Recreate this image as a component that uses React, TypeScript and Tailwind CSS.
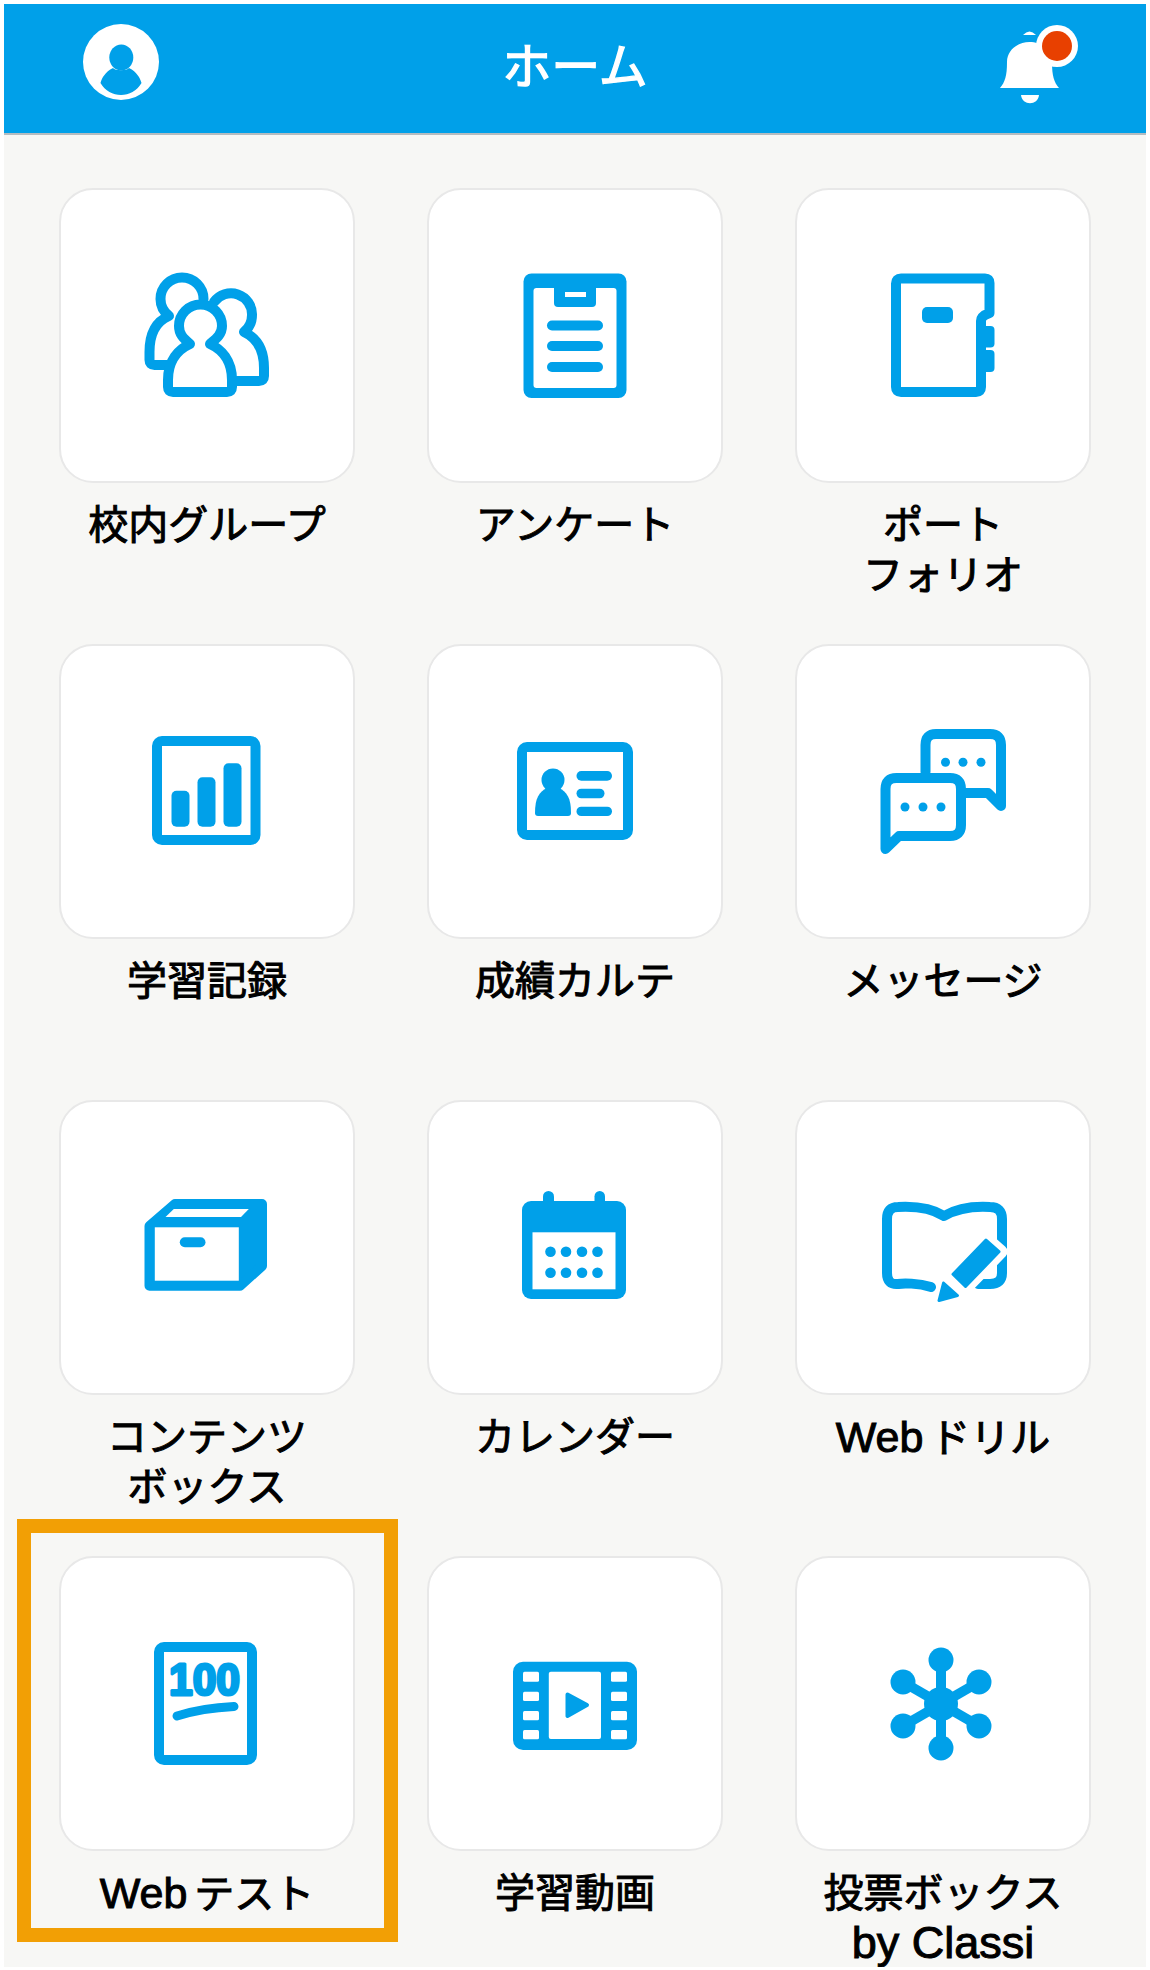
import React from 'react';

const BLUE = '#00a0e9';

const Svg: React.FC<{ children: React.ReactNode }> = ({ children }) => (
  <svg viewBox="0 0 130 130" className="w-[130px] h-[130px]" fill={BLUE}>
    {children}
  </svg>
);

const line = { fill: 'none', stroke: BLUE, strokeWidth: 10, strokeLinejoin: 'round', strokeLinecap: 'round' } as const;

const GroupIcon = () => (
  <Svg>
    <path {...line} d="M61.5 29A21.500 21.500 0 0 0 18.500 29C18.500 36 22 42 27 46C15 51 7.500 62 7.500 82V90Q7.500 95 12.500 95H30" />
    <path {...line} d="M72 32A21 21 0 0 1 110 45C110 52 107 58 102 62C113 67 122 78 122 98V106Q122 111 117 111H95" />
    <path
      {...line}
      fill="#fff"
      d="M48 74C37 79 26 90 26 110V117Q26 122 31 122H85Q90 122 90 117V110C90 90 79 79 68 74C75 68 80 64 80 56A21 21 0 0 0 37 56C37 64 41 68 48 74Z"
    />
  </Svg>
);

const ClipboardIcon = () => (
  <Svg>
    <rect x="13.5" y="3.5" width="103" height="124.5" rx="8" />
    <rect x="23.5" y="18" width="83" height="100" rx="3" fill="#fff" />
    <rect x="44" y="14" width="42" height="23" rx="4" />
    <rect x="55" y="22" width="21" height="5" fill="#fff" />
    <rect x="37" y="50.5" width="56" height="10" rx="5" />
    <rect x="37" y="71" width="56" height="10" rx="5" />
    <rect x="37" y="92" width="56" height="10" rx="5" />
  </Svg>
);

const NotebookIcon = () => (
  <Svg>
    <path {...line} d="M103 51Q103 46 111.5 43V13Q111.5 8.5 107 8.5H23Q18 8.5 18 13.5V117Q18 122 23 122H98Q103 122 103 117Z" />
    <rect x="44" y="37" width="31" height="16" rx="5" />
    <rect x="103" y="56" width="13.5" height="21.5" rx="4" />
    <rect x="103" y="80" width="13.5" height="22" rx="4" />
  </Svg>
);

const BarsIcon = () => (
  <Svg>
    <rect {...line} x="15" y="15" width="98.5" height="99" rx="5" />
    <rect x="29.5" y="64.7" width="18" height="36" rx="5" />
    <rect x="55.5" y="51.3" width="18" height="49.4" rx="5" />
    <rect x="81.5" y="37.3" width="18" height="63.4" rx="5" />
  </Svg>
);

const IdCardIcon = () => (
  <Svg>
    <rect {...line} x="12" y="21" width="106" height="88" rx="5" />
    <circle cx="43" cy="54" r="11.5" />
    <path d="M37 62C29 66 25 72 25 87Q25 90 28 90H58Q61 90 61 87C61 72 57 66 49 62Z" />
    <rect x="66.5" y="45" width="35.5" height="9.7" rx="4.8" />
    <rect x="66.5" y="62.7" width="28" height="9.6" rx="4.8" />
    <rect x="66.5" y="80.7" width="35.5" height="9.4" rx="4.7" />
  </Svg>
);

const ChatIcon = () => (
  <Svg>
    <path {...line} d="M47.5 46V19Q47.5 8 58 8H112Q123 8 123 19V80L110 67H86" />
    <circle cx="67.5" cy="36.3" r="4.5" />
    <circle cx="85" cy="36.3" r="4.5" />
    <circle cx="103" cy="36.3" r="4.5" />
    <path {...line} d="M7.5 123V63Q7.5 52 18.5 52H72Q83 52 83 63V99Q83 110 72 110H21Z" />
    <circle cx="27" cy="81" r="4.5" />
    <circle cx="45" cy="81" r="4.5" />
    <circle cx="63" cy="81" r="4.5" />
  </Svg>
);

const BoxIcon = () => (
  <Svg>
    <path stroke={BLUE} strokeWidth="10" strokeLinejoin="round" d="M33 22H120V84L98 103.700H7.500V44Z" />
    <rect x="12.800" y="45.300" width="84" height="53.400" fill="#fff" />
    <path fill="#fff" d="M31.800 27H106.800L99 35H23.500Z" />
    <rect x="37.800" y="55.300" width="25.700" height="10" rx="5" />
  </Svg>
);

const CalendarIcon = () => (
  <Svg>
    <rect x="12" y="19" width="104" height="98" rx="9" />
    <rect x="33" y="9" width="11" height="22" rx="5.500" />
    <rect x="84.500" y="9" width="10.500" height="22" rx="5.200" />
    <rect x="22.500" y="50.300" width="83" height="57" fill="#fff" />
    {[40.5, 56, 72, 87.5].map((x) => (
      <React.Fragment key={x}>
        <circle cx={x} cy="69.700" r="5.300" />
        <circle cx={x} cy="90.700" r="5.300" />
      </React.Fragment>
    ))}
  </Svg>
);

const BookIcon = () => (
  <Svg>
    <path {...line} d="M53 105C40 101 25 101 20 102Q9 103 9 91V37Q9 25 20 25C38 24 55 27 66 34C78 27 95 24 112 25Q124 25 124 37V91Q124 102 112 102H100" />
    <path fill="#fff" stroke="#fff" strokeWidth="13" strokeLinejoin="round" d="M108 56.300L123 69.700L87.500 106.300L73 92.300Z" />
    <path fill="#fff" stroke="#fff" strokeWidth="10" strokeLinejoin="round" d="M65 99.700L81 114L60 119.700Z" />
    <path stroke={BLUE} strokeWidth="3" strokeLinejoin="round" d="M108 58L121 69.700L87.500 104.500L75 92.300Z" />
    <path stroke={BLUE} strokeWidth="3" strokeLinejoin="round" d="M65.500 101L79.500 113.500L61 118.500Z" />
  </Svg>
);

const ScoreIcon = () => (
  <Svg>
    <rect {...line} x="17" y="9" width="93" height="113" rx="5" />
    <text
      x="27"
      y="57"
      textLength="71"
      lengthAdjust="spacingAndGlyphs"
      stroke={BLUE}
      strokeWidth="3"
      strokeLinejoin="round"
      className="font-['Liberation_Sans',sans-serif] font-bold text-[44px]"
    >
      100
    </text>
    <path {...line} strokeWidth="9" d="M35 78Q60 70 92 68.500" />
  </Svg>
);

const FilmIcon = () => (
  <Svg>
    <rect x="3" y="23.700" width="124" height="88.300" rx="10" />
    <rect x="38.800" y="33.700" width="52.200" height="67.300" rx="2" fill="#fff" />
    {[
      [33.7, 10],
      [53.7, 9.3],
      [73, 9.3],
      [92, 9.3],
    ].map(([y, h]) => (
      <React.Fragment key={y}>
        <rect x="13" y={y} width="16" height={h} rx="1.500" fill="#fff" />
        <rect x="101" y={y} width="16" height={h} rx="1.500" fill="#fff" />
      </React.Fragment>
    ))}
    <path stroke={BLUE} strokeWidth="4" strokeLinejoin="round" d="M57.500 56.500L77 67L57.500 78Z" />
  </Svg>
);

const NetworkIcon = () => {
  const cx = 63;
  const cy = 66;
  const spokes = [
    [0, -44],
    [38, -22],
    [38, 22],
    [0, 44],
    [-38, 22],
    [-38, -22],
  ];
  return (
    <Svg>
      {spokes.map(([dx, dy]) => (
        <React.Fragment key={`${dx},${dy}`}>
          <line x1={cx} y1={cy} x2={cx + dx} y2={cy + dy} stroke={BLUE} strokeWidth="10" />
          <circle cx={cx + dx} cy={cy + dy} r="12.500" />
        </React.Fragment>
      ))}
      <circle cx={cx} cy={cy} r="17" />
    </Svg>
  );
};

const Web = () => <span className="text-[43px] mr-[7px]">Web</span>;

const items: { id: string; label: React.ReactNode[]; icon: React.ReactNode }[] = [
  { id: 'group', label: ['校内グループ'], icon: <GroupIcon /> },
  { id: 'survey', label: ['アンケート'], icon: <ClipboardIcon /> },
  { id: 'portfolio', label: ['ポート', 'フォリオ'], icon: <NotebookIcon /> },
  { id: 'record', label: ['学習記録'], icon: <BarsIcon /> },
  { id: 'karte', label: ['成績カルテ'], icon: <IdCardIcon /> },
  { id: 'message', label: ['メッセージ'], icon: <ChatIcon /> },
  { id: 'contents', label: ['コンテンツ', 'ボックス'], icon: <BoxIcon /> },
  { id: 'calendar', label: ['カレンダー'], icon: <CalendarIcon /> },
  { id: 'drill', label: [<><Web />ドリル</>], icon: <BookIcon /> },
  { id: 'test', label: [<><Web />テスト</>], icon: <ScoreIcon /> },
  { id: 'video', label: ['学習動画'], icon: <FilmIcon /> },
  { id: 'vote', label: ['投票ボックス', <span className="text-[45px]">by Classi</span>], icon: <NetworkIcon /> },
];

export default function App() {
  return (
    <div className="relative w-[1150px] h-[1970px] bg-white pt-1 px-1 pb-[3px] font-['Liberation_Sans','Noto_Sans_CJK_JP',sans-serif]">
      <div className="h-full bg-[#f7f7f5] overflow-hidden">
        {/* Header */}
        <header className="h-[131px] bg-[#00a0e9] border-b-2 border-[#b4bcc0] grid grid-cols-[1fr_auto_1fr] items-start">
          <div className="pl-[79px] pt-5">
            <svg viewBox="0 0 76 76" className="w-[76px] h-[76px]">
              <circle cx="38" cy="38" r="38" fill="#fff" />
              <path
                fill="#00a0e9"
                d="M30 44C22 48 19 54 17.500 59C22 67 30 71 38 71C46 71 54 67 58.500 59C57 54 54 48 46 44C44 47 32 47 30 44Z"
              />
              <ellipse cx="38.300" cy="33.500" rx="12" ry="13" fill="#00a0e9" />
            </svg>
          </div>
          <h1 className="pt-[32px] text-[49px] leading-[62px] text-white [-webkit-text-stroke:1.3px_#fff]">ホーム</h1>
          <div className="flex justify-end pr-[56px] pt-[6px]">
            <svg viewBox="0 0 110 110" className="w-[110px] h-[110px]">
              <path fill="#fff" d="M43 25Q49.500 18 56 25Z" />
              <path fill="#fff" d="M20 78C25 72 27 66 27 52C27 40 38 32 49.500 32C61 32 72 40 72 52C72 66 74 72 79 78Z" />
              <path fill="#fff" d="M41 85H59C58 96 42 96 41 85Z" />
              <circle cx="77" cy="36" r="21" fill="#fff" />
              <circle cx="77" cy="36" r="15" fill="#e84000" />
            </svg>
          </div>
        </header>

        {/* Menu */}
        <main className="grid grid-cols-[repeat(3,296px)] auto-rows-[456px] gap-x-[72px] pl-[55px] pt-[53px]">
          {items.map((item) => (
            <div key={item.id} className="flex flex-col items-center">
              <div className="w-[296px] h-[295px] shrink-0 pb-0.5 bg-white border-2 border-[#e8e8e8] rounded-[34px] flex items-center justify-center">
                {item.icon}
              </div>
              <div className="mt-[17px] text-center text-[40px] leading-[50px] text-black whitespace-nowrap [-webkit-text-stroke:1px_#000]">
                {item.label.map((text, i) => (
                  <div key={i} className="h-[50px]">{text}</div>
                ))}
              </div>
            </div>
          ))}
        </main>
      </div>

      {/* Highlight */}
      <div className="absolute left-[17px] top-[1519px] w-[381px] h-[423px] border-[14px] border-[#f29f05]" />
    </div>
  );
}
